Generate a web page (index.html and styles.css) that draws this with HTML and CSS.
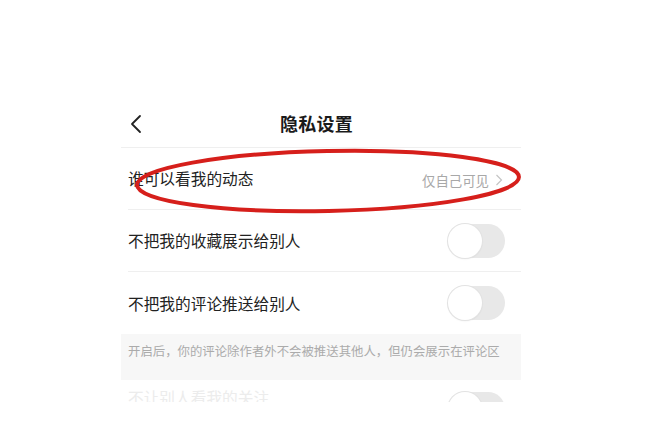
FILE: index.html
```html
<!DOCTYPE html>
<html lang="zh">
<head>
<meta charset="utf-8">
<link rel="stylesheet" href="styles.css">
</head>
<body>
<div class="page">
  <div class="phone">
    <header class="nav">
      <svg class="back" width="14" height="20" viewBox="0 0 14 20"><path d="M11 2 L3 10 L11 18" fill="none" stroke="#222" stroke-width="1.8" stroke-linecap="round" stroke-linejoin="round"/></svg>
      <h1 class="title">隐私设置</h1>
    </header>
    <div class="list">
      <div class="row">
        <span class="label">谁可以看我的动态</span>
        <span class="value">仅自己可见<svg class="chev" width="8" height="12" viewBox="0 0 8 12"><path d="M1.5 1 L6.5 6 L1.5 11" fill="none" stroke="#c4c4c4" stroke-width="1.2"/></svg></span>
      </div>
      <div class="row">
        <span class="label">不把我的收藏展示给别人</span>
        <span class="switch"><span class="knob"></span></span>
      </div>
      <div class="row last">
        <span class="label">不把我的评论推送给别人</span>
        <span class="switch"><span class="knob"></span></span>
      </div>
      <div class="note">开启后，你的评论除作者外不会被推送其他人，但仍会展示在评论区</div>
      <div class="row partial">
        <span class="label faded">不让别人看我的关注</span>
        <span class="switch"><span class="knob"></span></span>
      </div>
    </div>
    <svg class="circle" width="420" height="80" viewBox="0 0 420 80">
      <ellipse cx="193" cy="39" rx="191" ry="30" transform="rotate(-1.2 193 39)" fill="none" stroke="#d61f1b" stroke-width="4"/>
    </svg>
  </div>
</div>
</body>
</html>
```
FILE: styles.css
```css
* { box-sizing: border-box; margin: 0; padding: 0; }
html, body { background: #fff; }
body {
  font-family: "Noto Sans CJK SC", "Noto Sans", sans-serif;
  color: #222;
}
.page {
  width: 663px;
  height: 422px;
  padding: 100px 0 0 121px;
}
.phone {
  position: relative;
  width: 400px;
  height: 302px;
  overflow: hidden;
}
.nav {
  position: relative;
  height: 48px;
  display: flex;
  align-items: center;
  justify-content: center;
  border-bottom: 1px solid #efefef;
}
.back {
  position: absolute;
  left: 8px;
  top: 14px;
}
.title {
  font-size: 18px;
  font-weight: 600;
  color: #1a1a1a;
  letter-spacing: 0.3px;
  margin-top: -1px;
  margin-right: 9px;
}
.row {
  height: 62px;
  margin-left: 7px;
  padding-right: 16px;
  display: flex;
  align-items: center;
  justify-content: space-between;
  border-bottom: 1px solid #efefef;
}
.row.last { border-bottom: none; }
.row.partial {
  align-items: flex-start;
  padding-top: 12px;
  border-bottom: none;
}
.label {
  font-size: 15.7px;
  color: #222;
}
.label.faded {
  color: #ececec;
  line-height: 20px;
  margin-top: -4px;
}
.value {
  display: flex;
  align-items: center;
  gap: 6px;
  font-size: 13.4px;
  color: #a8a8a8;
  margin-top: 2px;
  padding-right: 2px;
}
.chev { display: block; }
.switch {
  width: 57px;
  height: 34px;
  border-radius: 17px;
  background: #e8e8e8;
  position: relative;
}
.knob {
  position: absolute;
  left: 0;
  top: 0;
  width: 34px;
  height: 34px;
  border-radius: 50%;
  background: #fff;
  box-shadow: 0 0 0 1px #e2e2e2, 0 1px 2px rgba(0,0,0,0.08);
}
.note {
  height: 46px;
  background: #f7f7f7;
  padding: 8px 0 0 7px;
  font-size: 12.4px;
  color: #ababab;
  line-height: 18px;
  white-space: nowrap;
}
.circle {
  position: absolute;
  left: 14px;
  top: 42px;
}
```
